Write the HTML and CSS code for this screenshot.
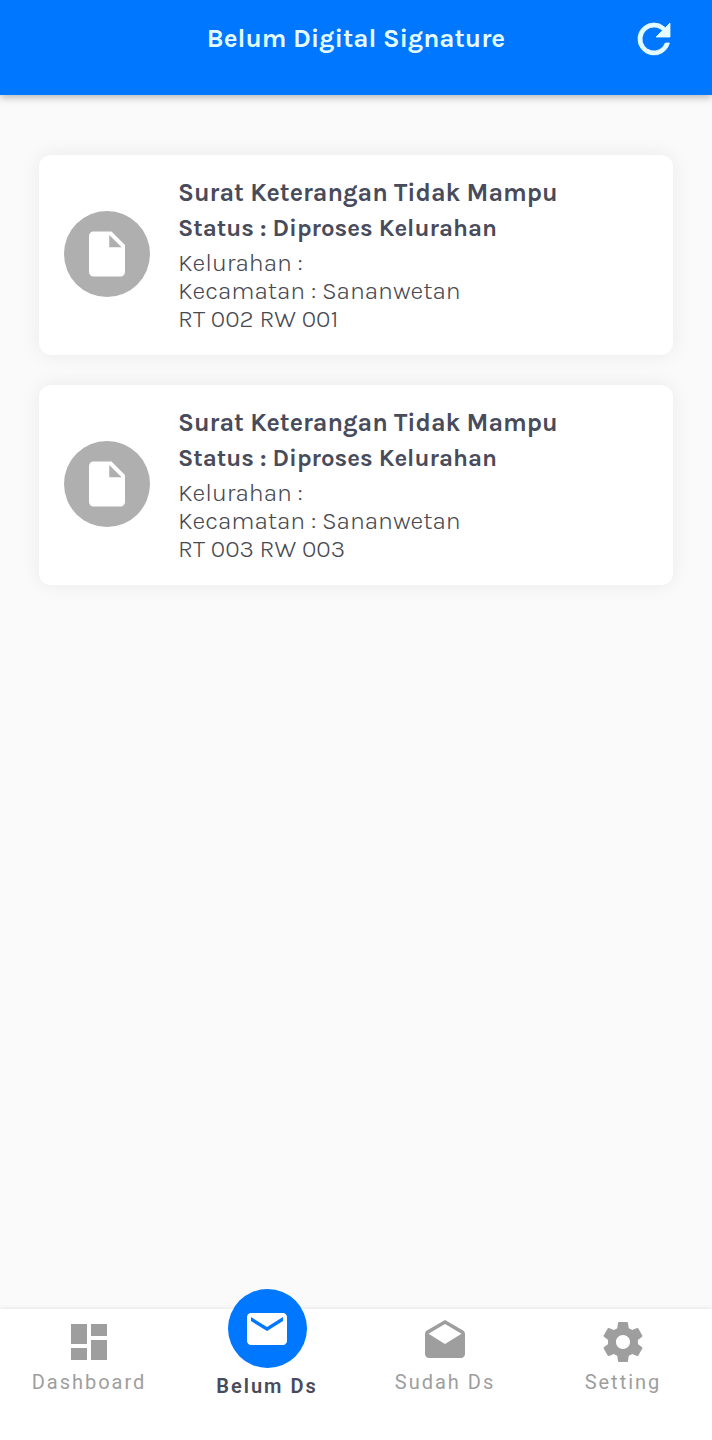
FILE: index.html
```html
<!DOCTYPE html>
<html lang="id">
<head>
<meta charset="utf-8">
<meta name="viewport" content="width=device-width, initial-scale=1">
<title>Belum Digital Signature</title>
<link rel="stylesheet" href="styles.css">
</head>
<body>
<header class="appbar">
  <h1 class="appbar-title">Belum Digital Signature</h1>
  <button class="refresh" type="button" aria-label="Muat ulang">
    <svg class="icon" viewBox="0 0 24 24" aria-hidden="true"><path d="M17.65 6.35A7.96 7.96 0 0 0 12 4a8 8 0 1 0 7.73 10h-2.08A6 6 0 1 1 12 6c1.66 0 3.14.69 4.22 1.78L13 11h7V4z"/></svg>
  </button>
</header>
<main class="list">
  <article class="card">
    <span class="avatar"><svg class="doc-icon" viewBox="0 0 24 24" aria-hidden="true"><path d="M6 2c-1.1 0-1.99.9-1.99 2L4 20c0 1.1.89 2 1.99 2H18c1.1 0 2-.9 2-2V8l-6-6H6zm7 7V3.5L18.5 9H13z"/></svg></span>
    <div class="card-body">
      <h2 class="card-title">Surat Keterangan Tidak Mampu</h2>
      <p class="card-status">Status : Diproses Kelurahan</p>
      <p class="card-line">Kelurahan :</p>
      <p class="card-line">Kecamatan : Sananwetan</p>
      <p class="card-line">RT 002 RW 001</p>
    </div>
  </article>
  <article class="card">
    <span class="avatar"><svg class="doc-icon" viewBox="0 0 24 24" aria-hidden="true"><path d="M6 2c-1.1 0-1.99.9-1.99 2L4 20c0 1.1.89 2 1.99 2H18c1.1 0 2-.9 2-2V8l-6-6H6zm7 7V3.5L18.5 9H13z"/></svg></span>
    <div class="card-body">
      <h2 class="card-title">Surat Keterangan Tidak Mampu</h2>
      <p class="card-status">Status : Diproses Kelurahan</p>
      <p class="card-line">Kelurahan :</p>
      <p class="card-line">Kecamatan : Sananwetan</p>
      <p class="card-line">RT 003 RW 003</p>
    </div>
  </article>
</main>
<nav class="tabs" aria-label="Navigasi utama">
  <a class="tab" href="#dashboard">
    <svg class="icon" viewBox="0 0 24 24" aria-hidden="true"><path d="M3 13h8V3H3v10zm0 8h8v-6H3v6zm10 0h8V11h-8v10zm0-18v6h8V3h-8z"/></svg>
    <span>Dashboard</span>
  </a>
  <a class="tab tab-active" href="#belum" aria-current="page">
    <span class="bubble"><svg class="icon" viewBox="0 0 24 24" aria-hidden="true"><path d="M20 4H4c-1.1 0-1.99.9-1.99 2L2 18c0 1.1.9 2 2 2h16c1.1 0 2-.9 2-2V6c0-1.1-.9-2-2-2zm0 4l-8 5-8-5V6l8 5 8-5v2z"/></svg></span>
    <span>Belum Ds</span>
  </a>
  <a class="tab" href="#sudah">
    <svg class="icon" viewBox="0 0 24 24" aria-hidden="true"><path d="M21.99 8c0-.72-.37-1.35-.94-1.7L12 1 2.95 6.3C2.38 6.65 2 7.28 2 8v10c0 1.1.9 2 2 2h16c1.1 0 2-.9 2-2l-.01-10zM12 13L3.74 7.84 12 3l8.26 4.84L12 13z"/></svg>
    <span>Sudah Ds</span>
  </a>
  <a class="tab" href="#setting">
    <svg class="icon" viewBox="0 0 24 24" aria-hidden="true"><path d="M19.43 12.98c.04-.32.07-.64.07-.98s-.03-.66-.07-.98l2.11-1.65c.19-.15.24-.42.12-.64l-2-3.46c-.12-.22-.39-.3-.61-.22l-2.49 1c-.52-.4-1.08-.73-1.69-.98l-.38-2.65A.488.488 0 0 0 14 2h-4c-.25 0-.46.18-.49.42l-.38 2.65c-.61.25-1.17.59-1.69.98l-2.49-1c-.23-.09-.49 0-.61.22l-2 3.46c-.13.22-.07.49.12.64l2.11 1.65c-.04.32-.07.65-.07.98s.03.66.07.98l-2.11 1.65c-.19.15-.24.42-.12.64l2 3.46c.12.22.39.3.61.22l2.49-1c.52.4 1.08.73 1.69.98l.38 2.65c.03.24.24.42.49.42h4c.25 0 .46-.18.49-.42l.38-2.65c.61-.25 1.17-.59 1.69-.98l2.49 1c.23.09.49 0 .61-.22l2-3.46c.12-.22.07-.49-.12-.64l-2.11-1.65zM12 15.5c-1.93 0-3.5-1.57-3.5-3.5s1.57-3.5 3.5-3.5 3.5 1.57 3.5 3.5-1.57 3.5-3.5 3.5z"/></svg>
    <span>Setting</span>
  </a>
</nav>
</body>
</html>
```
FILE: styles.css
```css
* {
  box-sizing: border-box;
}

body {
  margin: 0;
  min-height: 100vh;
  display: flex;
  flex-direction: column;
  background: #fafafa;
  color: #484b5b;
  font-family: Karla, Inter, sans-serif;
}

h1, h2, p {
  margin: 0;
}

.icon {
  display: block;
  width: 48px;
  height: 48px;
  fill: currentColor;
}

.appbar {
  display: grid;
  grid-template-columns: 48px 1fr 48px;
  align-items: center;
  padding: 15px 34px 32px;
  background: #0077ff;
  color: #e4fbff;
  box-shadow: 0 2px 8px rgba(0, 0, 0, 0.3);
}

.appbar-title {
  grid-column: 2;
  text-align: center;
  font-size: 26px;
  line-height: 48px;
  font-weight: 700;
}

.refresh {
  padding: 0;
  border: 0;
  background: none;
  color: inherit;
}

.refresh .icon {
  stroke: currentColor;
  stroke-width: 0.4;
}

.list {
  flex: 1;
  display: flex;
  flex-direction: column;
  gap: 30px;
  padding: 60px 39px;
}

.card {
  display: flex;
  align-items: center;
  gap: 28px;
  padding: 20px 25px 22px;
  border-radius: 12px;
  background: #fff;
  box-shadow: 0 0 20px rgba(0, 0, 0, 0.07);
}

.avatar {
  flex: none;
  display: flex;
  align-items: center;
  justify-content: center;
  width: 86px;
  height: 86px;
  border-radius: 50%;
  background: #afafaf;
}

.doc-icon {
  width: 54px;
  height: 54px;
  fill: #fff;
}

.card-title {
  font-size: 25px;
  line-height: 36px;
  font-weight: 700;
}

.card-status {
  margin-bottom: 3px;
  font-size: 24px;
  line-height: 35px;
  font-weight: 700;
}

.card-line {
  color: #484a52;
  font-size: 25px;
  line-height: 28px;
  font-weight: 300;
}

.tabs {
  display: grid;
  grid-template-columns: repeat(4, 1fr);
  align-items: end;
  padding: 9px 0 46px;
  background: #fff;
  box-shadow: 0 -1px 4px rgba(0, 0, 0, 0.08);
}

.tab {
  display: flex;
  flex-direction: column;
  align-items: center;
  gap: 4px;
  color: #9e9e9e;
  font-family: Roboto, sans-serif;
  font-size: 20px;
  line-height: 24px;
  letter-spacing: 2px;
  text-decoration: none;
}

.tab-active {
  gap: 6px;
  margin: -30px 0 -4px;
  color: #484b5b;
  font-weight: 600;
}

.bubble {
  display: flex;
  align-items: center;
  justify-content: center;
  width: 79px;
  height: 79px;
  border-radius: 50%;
  background: #0077ff;
  color: #fff;
}
```
